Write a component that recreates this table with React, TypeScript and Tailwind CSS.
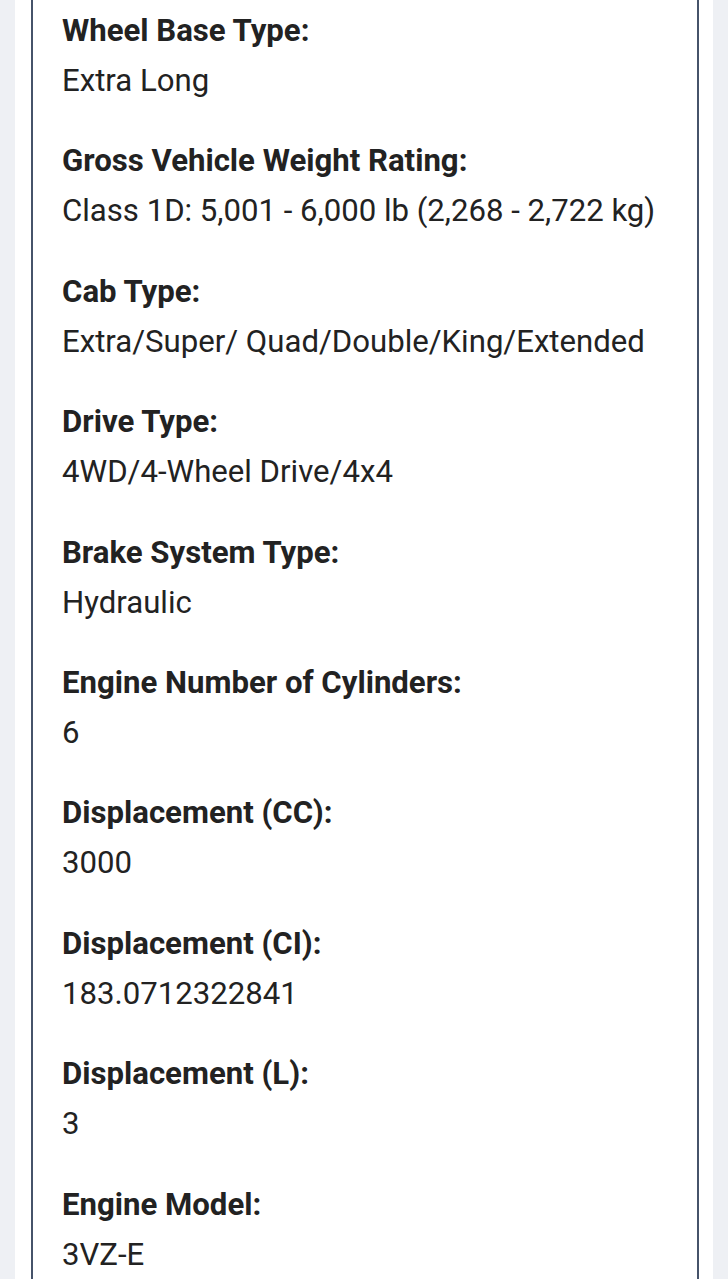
import React from "react";

const items: [string, string][] = [
  ["Wheel Base Type:", "Extra Long"],
  ["Gross Vehicle Weight Rating:", "Class 1D: 5,001 - 6,000 lb (2,268 - 2,722 kg)"],
  ["Cab Type:", "Extra/Super/ Quad/Double/King/Extended"],
  ["Drive Type:", "4WD/4-Wheel Drive/4x4"],
  ["Brake System Type:", "Hydraulic"],
  ["Engine Number of Cylinders:", "6"],
  ["Displacement (CC):", "3000"],
  ["Displacement (CI):", "183.0712322841"],
  ["Displacement (L):", "3"],
  ["Engine Model:", "3VZ-E"],
];

export default function App() {
  return (
    <div
      className="min-h-screen bg-[#eef0f4] pl-[15px] pr-[15px] overflow-hidden h-[1279px]"
      style={{ fontFamily: "Roboto, 'Noto Sans', Arial, sans-serif" }}
    >
      <div className="bg-white pl-[16px] pr-[14px] h-full">
        <div className="border-x-2 border-[#46536a] h-full pl-[29px] pt-[6px] text-[#222222] text-[31.15px]">
          {items.map(([label, value]) => (
            <div key={label} className="mb-[30.4px]">
              <div className="font-bold leading-[50px] whitespace-nowrap">{label}</div>
              <div className="leading-[50px] whitespace-nowrap">{value}</div>
            </div>
          ))}
        </div>
      </div>
    </div>
  );
}
